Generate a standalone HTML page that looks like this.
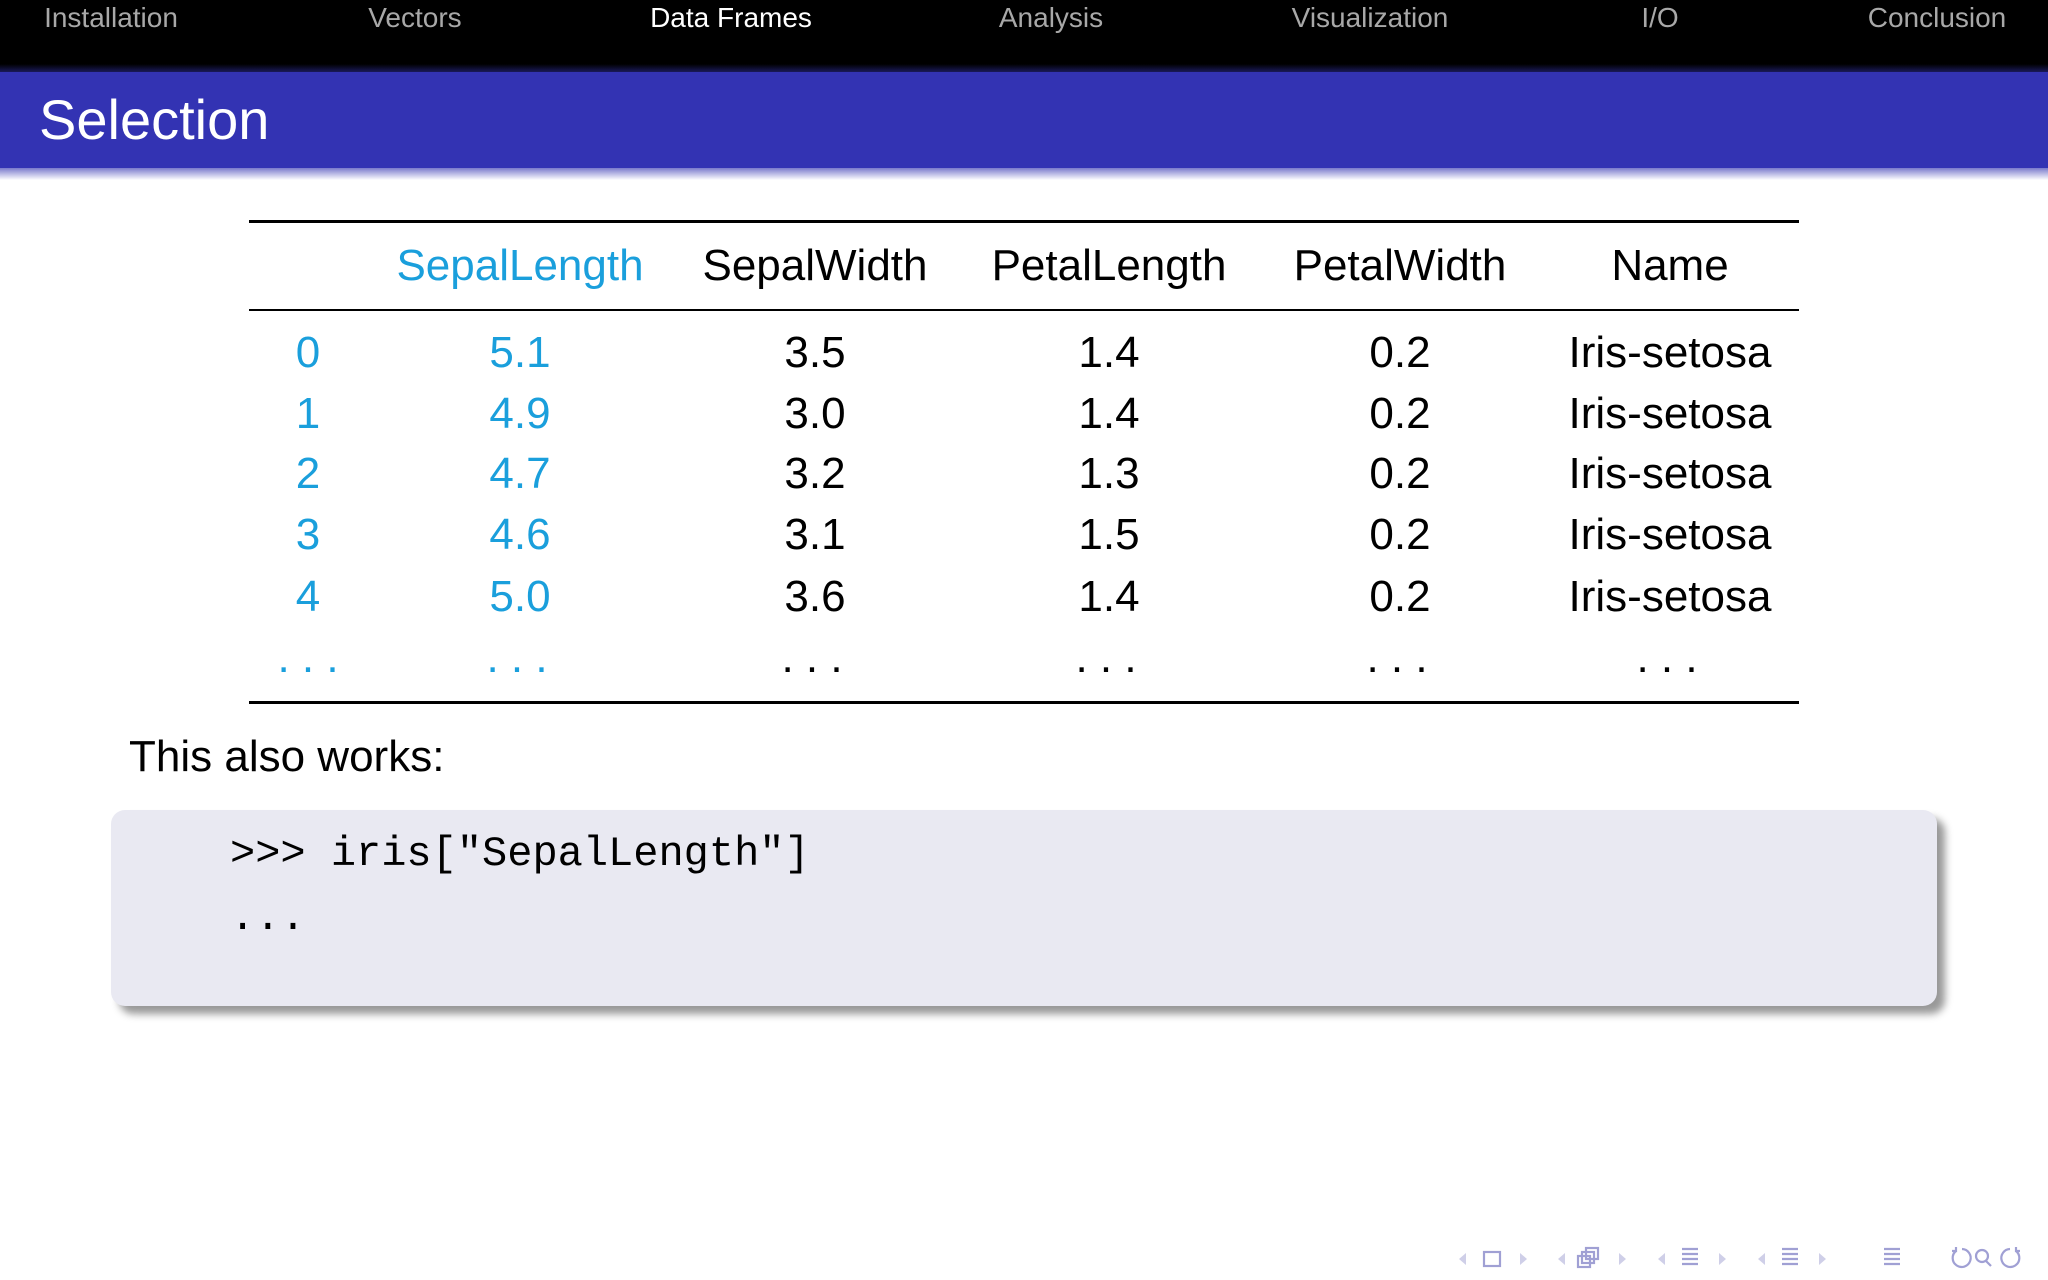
<!DOCTYPE html>
<html><head><meta charset="utf-8"><style>
html,body{margin:0;padding:0}
body{width:2048px;height:1280px;position:relative;overflow:hidden;background:#fff;font-family:"Liberation Sans","DejaVu Sans",sans-serif}
.nav{position:absolute;left:0;top:0;width:2048px;height:68px;background:#000}
.nv{position:absolute;top:2px;font-size:28px;color:#a8a8a8;transform:translateX(-50%);white-space:nowrap;line-height:32px}
.hdr{position:absolute;left:0;top:72px;width:2048px;height:96px;background:#3333b3}
.sh1{position:absolute;left:0;top:64px;width:2048px;height:8px;background:linear-gradient(#000,#1a1a5a)}
.sh2{position:absolute;left:0;top:168px;width:2048px;height:12px;background:linear-gradient(#7a7acc,#fff)}
.title{position:absolute;left:39px;top:85px;font-size:56px;color:#fff;line-height:70px}
.rule{position:absolute;left:249px;width:1550px;background:#000}
.c{position:absolute;width:300px;text-align:center;font-size:44px;line-height:60px;white-space:nowrap}
.b{color:#1a9fdc}
.txt{position:absolute;left:129px;top:727px;font-size:44px;line-height:60px}
.code{position:absolute;left:111px;top:810px;width:1826px;height:196px;background:#e9e9f2;border-radius:14px;box-shadow:8px 8px 8px #999}
.mono{position:absolute;font-family:"Liberation Mono",monospace;font-size:42px;line-height:56px;white-space:pre}
</style></head><body>
<div class="nav">
<div class="nv" style="left:111px">Installation</div>
<div class="nv" style="left:415px">Vectors</div>
<div class="nv" style="left:731px;color:#fff">Data Frames</div>
<div class="nv" style="left:1051px">Analysis</div>
<div class="nv" style="left:1370px">Visualization</div>
<div class="nv" style="left:1660px">I/O</div>
<div class="nv" style="left:1937px">Conclusion</div>
</div>
<div class="sh1"></div>
<div class="hdr"></div>
<div class="sh2"></div>
<div class="title">Selection</div>

<div class="rule" style="top:220px;height:3px"></div>
<div class="rule" style="top:309px;height:2px"></div>
<div class="rule" style="top:701px;height:3px"></div>

<div class="c b" style="left:370px;top:236px">SepalLength</div>
<div class="c" style="left:665px;top:236px">SepalWidth</div>
<div class="c" style="left:959px;top:236px">PetalLength</div>
<div class="c" style="left:1250px;top:236px">PetalWidth</div>
<div class="c" style="left:1520px;top:236px">Name</div>

<div class="c b" style="left:158px;top:323px">0</div><div class="c b" style="left:370px;top:323px">5.1</div><div class="c" style="left:665px;top:323px">3.5</div><div class="c" style="left:959px;top:323px">1.4</div><div class="c" style="left:1250px;top:323px">0.2</div><div class="c" style="left:1520px;top:323px">Iris-setosa</div>
<div class="c b" style="left:158px;top:384px">1</div><div class="c b" style="left:370px;top:384px">4.9</div><div class="c" style="left:665px;top:384px">3.0</div><div class="c" style="left:959px;top:384px">1.4</div><div class="c" style="left:1250px;top:384px">0.2</div><div class="c" style="left:1520px;top:384px">Iris-setosa</div>
<div class="c b" style="left:158px;top:444px">2</div><div class="c b" style="left:370px;top:444px">4.7</div><div class="c" style="left:665px;top:444px">3.2</div><div class="c" style="left:959px;top:444px">1.3</div><div class="c" style="left:1250px;top:444px">0.2</div><div class="c" style="left:1520px;top:444px">Iris-setosa</div>
<div class="c b" style="left:158px;top:505px">3</div><div class="c b" style="left:370px;top:505px">4.6</div><div class="c" style="left:665px;top:505px">3.1</div><div class="c" style="left:959px;top:505px">1.5</div><div class="c" style="left:1250px;top:505px">0.2</div><div class="c" style="left:1520px;top:505px">Iris-setosa</div>
<div class="c b" style="left:158px;top:567px">4</div><div class="c b" style="left:370px;top:567px">5.0</div><div class="c" style="left:665px;top:567px">3.6</div><div class="c" style="left:959px;top:567px">1.4</div><div class="c" style="left:1250px;top:567px">0.2</div><div class="c" style="left:1520px;top:567px">Iris-setosa</div>
<div class="c b" style="left:158px;top:628px">. . .</div><div class="c b" style="left:367px;top:628px">. . .</div><div class="c" style="left:662px;top:628px">. . .</div><div class="c" style="left:956px;top:628px">. . .</div><div class="c" style="left:1247px;top:628px">. . .</div><div class="c" style="left:1517px;top:628px">. . .</div>

<div class="txt">This also works:</div>
<div class="code"></div>
<div class="mono" style="left:230px;top:826px">&gt;&gt;&gt; iris["SepalLength"]</div>
<div class="mono" style="left:230px;top:890px">...</div>

<svg style="position:absolute;left:1440px;top:1232px" width="600" height="44" viewBox="0 0 600 40">
<g fill="#cfcfe8" stroke="none">
<polygon points="26,19 19,25 26,31"/><polygon points="80,19 87,25 80,31"/>
<polygon points="125,19 118,25 125,31"/><polygon points="179,19 186,25 179,31"/>
<polygon points="225,19 218,25 225,31"/><polygon points="279,19 286,25 279,31"/>
<polygon points="325,19 318,25 325,31"/><polygon points="379,19 386,25 379,31"/>
</g>
<g fill="none" stroke="#a0a0d4" stroke-width="2.2">
<rect x="44" y="18" width="16" height="14"/>
<rect x="138" y="22" width="12" height="11"/><rect x="142" y="18" width="12" height="11"/><rect x="146" y="14" width="12" height="11"/>
<path d="M242 15h16M242 20h16M242 25h16M242 30h16"/>
<path d="M342 15h16M342 20h16M342 25h16M342 30h16"/>
<path d="M444 15h16M444 20h16M444 25h16M444 30h16"/>
<path d="M516 17a9 9 0 1 0 6-2M512 17l4 0l0-4"/>
<circle cx="542" cy="22" r="6"/><path d="M546 27l5 5"/>
<path d="M576 17a9 9 0 1 1-6-2M580 17l-4 0l0-4"/>
</g>
</svg>
</body></html>
